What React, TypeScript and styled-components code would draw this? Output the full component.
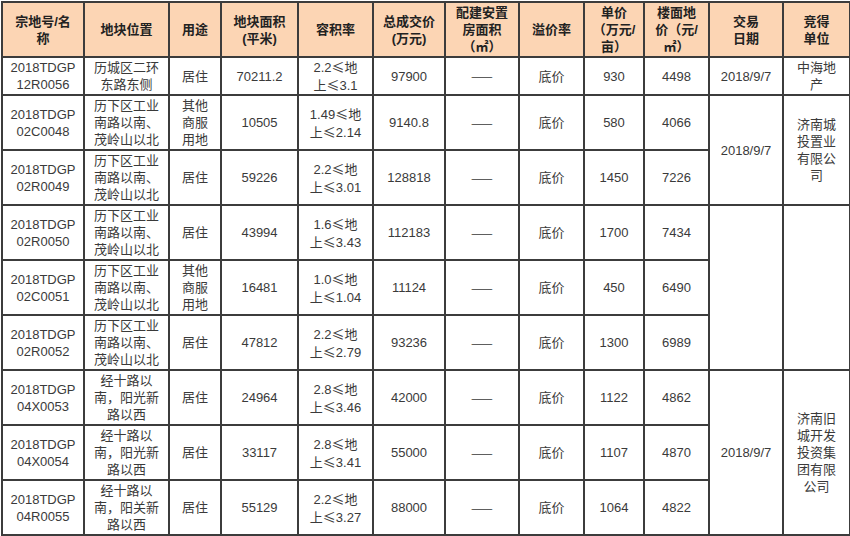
import { FC } from "react";
import styled, { createGlobalStyle } from "styled-components";

const GlobalStyle = createGlobalStyle`
  html, body {
    margin: 0;
    padding: 0;
    background: #fff;
  }
  body {
    font-family: "Liberation Sans", "Noto Sans CJK SC", sans-serif;
    color: #333;
  }
`;

const Wrapper = styled.div`
  padding: 1px;
  width: 848px;
`;

const Table = styled.table`
  border-collapse: collapse;
  table-layout: fixed;
  width: 848px;
  font-size: 13px;
  line-height: 17px;
`;

const Col = styled.col<{ $w: number }>`
  width: ${(p) => p.$w}px;
`;

const HeadRow = styled.tr`
  height: 55px;
  background: #fcd5b4;
`;

const Row = styled.tr<{ $h: number }>`
  height: ${(p) => p.$h}px;
`;

const HeadCell = styled.th`
  border: 2px solid #3c3c3c;
  padding: 0 2px;
  font-weight: bold;
  color: #222;
  text-align: center;
  vertical-align: middle;
`;

const Cell = styled.td`
  border: 2px solid #3c3c3c;
  padding: 0 2px;
  text-align: center;
  vertical-align: middle;
  color: #3a3a3a;
`;

const Line = styled.div`
  white-space: nowrap;
`;

const Cjk = styled.span`
  font-family: "Noto Sans CJK SC", sans-serif;
`;

const widths = [82, 85, 52, 77, 75, 72, 74, 65, 60, 65, 74, 67];

const headers: string[][] = [
  ["宗地号/名", "称"],
  ["地块位置"],
  ["用途"],
  ["地块面积", "(平米)"],
  ["容积率"],
  ["总成交价", "(万元)"],
  ["配建安置", "房面积", "（㎡）"],
  ["溢价率"],
  ["单价", "（万元/", "亩）"],
  ["楼面地", "价（元/", "㎡）"],
  ["交易", "日期"],
  ["竞得", "单位"],
];

interface Deal {
  code: string[];
  place: string[];
  use: string[];
  area: string;
  ratio: [string, string];
  total: string;
  unit: string;
  floor: string;
}

interface Group {
  span: number;
  date: string;
  winner: string[];
}

const xiaXia = ["历下区工业", "南路以南、", "茂岭山以北"];
const shang = ["其他", "商服", "用地"];

const deals: Deal[] = [
  { code: ["2018TDGP", "12R0056"], place: ["历城区二环", "东路东侧"], use: ["居住"], area: "70211.2", ratio: ["2.2", "3.1"], total: "97900", unit: "930", floor: "4498" },
  { code: ["2018TDGP", "02C0048"], place: xiaXia, use: shang, area: "10505", ratio: ["1.49", "2.14"], total: "9140.8", unit: "580", floor: "4066" },
  { code: ["2018TDGP", "02R0049"], place: xiaXia, use: ["居住"], area: "59226", ratio: ["2.2", "3.01"], total: "128818", unit: "1450", floor: "7226" },
  { code: ["2018TDGP", "02R0050"], place: xiaXia, use: ["居住"], area: "43994", ratio: ["1.6", "3.43"], total: "112183", unit: "1700", floor: "7434" },
  { code: ["2018TDGP", "02C0051"], place: xiaXia, use: shang, area: "16481", ratio: ["1.0", "1.04"], total: "11124", unit: "450", floor: "6490" },
  { code: ["2018TDGP", "02R0052"], place: xiaXia, use: ["居住"], area: "47812", ratio: ["2.2", "2.79"], total: "93236", unit: "1300", floor: "6989" },
  { code: ["2018TDGP", "04X0053"], place: ["经十路以", "南，阳光新", "路以西"], use: ["居住"], area: "24964", ratio: ["2.8", "3.46"], total: "42000", unit: "1122", floor: "4862" },
  { code: ["2018TDGP", "04X0054"], place: ["经十路以", "南，阳光新", "路以西"], use: ["居住"], area: "33117", ratio: ["2.8", "3.41"], total: "55000", unit: "1107", floor: "4870" },
  { code: ["2018TDGP", "04R0055"], place: ["经十路以", "南，阳关新", "路以西"], use: ["居住"], area: "55129", ratio: ["2.2", "3.27"], total: "88000", unit: "1064", floor: "4822" },
];

// merged date / winner cells, keyed by the row they start on
const groups: Record<number, Group> = {
  0: { span: 1, date: "2018/9/7", winner: ["中海地", "产"] },
  1: { span: 2, date: "2018/9/7", winner: ["济南城", "投置业", "有限公", "司"] },
  3: { span: 3, date: "", winner: [] },
  6: { span: 3, date: "2018/9/7", winner: ["济南旧", "城开发", "投资集", "团有限", "公司"] },
};

const Lines: FC<{ lines: string[] }> = ({ lines }) => (
  <>
    {lines.map((l, i) => (
      <Line key={i}>{l}</Line>
    ))}
  </>
);

const Ratio: FC<{ lo: string; hi: string }> = ({ lo, hi }) => (
  <>
    <Line>
      {lo}
      <Cjk>≤地</Cjk>
    </Line>
    <Line>
      <Cjk>上≤</Cjk>
      {hi}
    </Line>
  </>
);

export default function App() {
  return (
    <Wrapper>
      <GlobalStyle />
      <Table>
        <colgroup>
          {widths.map((w, i) => (
            <Col key={i} $w={w} />
          ))}
        </colgroup>
        <thead>
          <HeadRow>
            {headers.map((h, i) => (
              <HeadCell key={i}>
                <Lines lines={h} />
              </HeadCell>
            ))}
          </HeadRow>
        </thead>
        <tbody>
          {deals.map((d, i) => {
            const g = groups[i];
            return (
              <Row key={d.code[1]} $h={i === 0 ? 38 : 55}>
                <Cell><Lines lines={d.code} /></Cell>
                <Cell><Lines lines={d.place} /></Cell>
                <Cell><Lines lines={d.use} /></Cell>
                <Cell>{d.area}</Cell>
                <Cell><Ratio lo={d.ratio[0]} hi={d.ratio[1]} /></Cell>
                <Cell>{d.total}</Cell>
                <Cell><Cjk>——</Cjk></Cell>
                <Cell>底价</Cell>
                <Cell>{d.unit}</Cell>
                <Cell>{d.floor}</Cell>
                {g && (
                  <>
                    <Cell rowSpan={g.span}>{g.date}</Cell>
                    <Cell rowSpan={g.span}><Lines lines={g.winner} /></Cell>
                  </>
                )}
              </Row>
            );
          })}
        </tbody>
      </Table>
    </Wrapper>
  );
}
